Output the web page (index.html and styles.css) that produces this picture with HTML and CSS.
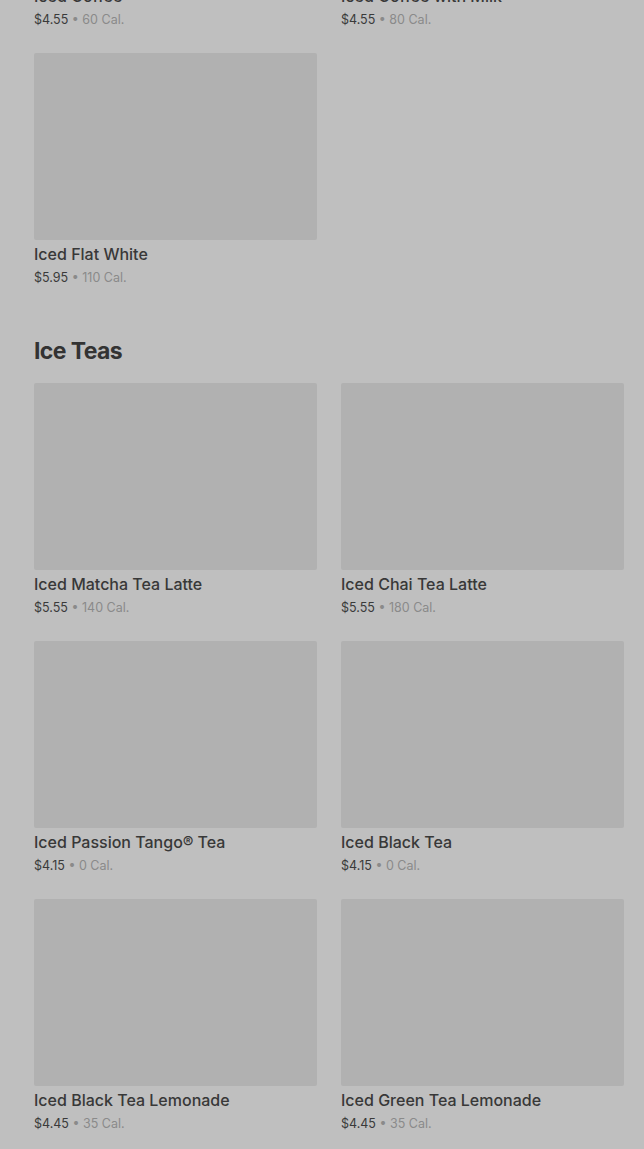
FILE: index.html
```html
<!DOCTYPE html>
<html>
<head>
<meta charset="utf-8">
<title>Menu</title>
<link rel="stylesheet" href="styles.css">
</head>
<body>
<div class="menu">
    <section class="category scrolled">
        <div class="product-grid">
            <div class="product">
                <div class="product-image"></div>
                <div class="product-name">Iced Coffee</div>
                <div class="product-info">$4.55 <span class="cal">• 60 Cal.</span></div>
            </div>
            <div class="product">
                <div class="product-image"></div>
                <div class="product-name">Iced Coffee with Milk</div>
                <div class="product-info">$4.55 <span class="cal">• 80 Cal.</span></div>
            </div>
            <div class="product">
                <div class="product-image"></div>
                <div class="product-name">Iced Flat White</div>
                <div class="product-info">$5.95 <span class="cal">• 110 Cal.</span></div>
            </div>
        </div>
    </section>

    <section class="category">
        <h2 class="category-title">Ice Teas</h2>
        <div class="product-grid">
            <div class="product">
                <div class="product-image"></div>
                <div class="product-name">Iced Matcha Tea Latte</div>
                <div class="product-info">$5.55 <span class="cal">• 140 Cal.</span></div>
            </div>
            <div class="product">
                <div class="product-image"></div>
                <div class="product-name">Iced Chai Tea Latte</div>
                <div class="product-info">$5.55 <span class="cal">• 180 Cal.</span></div>
            </div>
            <div class="product">
                <div class="product-image"></div>
                <div class="product-name">Iced Passion Tango® Tea</div>
                <div class="product-info">$4.15 <span class="cal">• 0 Cal.</span></div>
            </div>
            <div class="product">
                <div class="product-image"></div>
                <div class="product-name">Iced Black Tea</div>
                <div class="product-info">$4.15 <span class="cal">• 0 Cal.</span></div>
            </div>
            <div class="product">
                <div class="product-image"></div>
                <div class="product-name">Iced Black Tea Lemonade</div>
                <div class="product-info">$4.45 <span class="cal">• 35 Cal.</span></div>
            </div>
            <div class="product">
                <div class="product-image"></div>
                <div class="product-name">Iced Green Tea Lemonade</div>
                <div class="product-info">$4.45 <span class="cal">• 35 Cal.</span></div>
            </div>
        </div>
    </section>
</div>
</body>
</html>
```

FILE: styles.css
```css
body {
    margin: 0;
    background: #bfbfbf;
    font-family: Inter, "Noto Sans", sans-serif;
    color: #383838;
    overflow: hidden;
}

.menu {
    padding: 0 20px 0 34px;
}

/* page is scrolled down past the top of the first section */
.scrolled {
    margin-top: -205px;
}

.category-title {
    margin: 50px 0 18px;
    font-size: 23px;
    line-height: 28px;
    font-weight: 700;
    letter-spacing: -0.6px;
    color: #333;
}

.product-grid {
    display: grid;
    grid-template-columns: repeat(2, 283px);
    column-gap: 24px;
    row-gap: 24px;
}

.product-image {
    height: 187px;
    background-color: #b1b1b1;
    border-radius: 2px;
}

.product-name {
    margin-top: 3px;
    font-size: 16px;
    line-height: 22px;
    font-weight: 500;
}

.product-info {
    margin-top: 3px;
    font-size: 12.5px;
    line-height: 19px;
    color: #3a3a3a;
}

.product-info .cal {
    color: #8a8a8a;
}
```
